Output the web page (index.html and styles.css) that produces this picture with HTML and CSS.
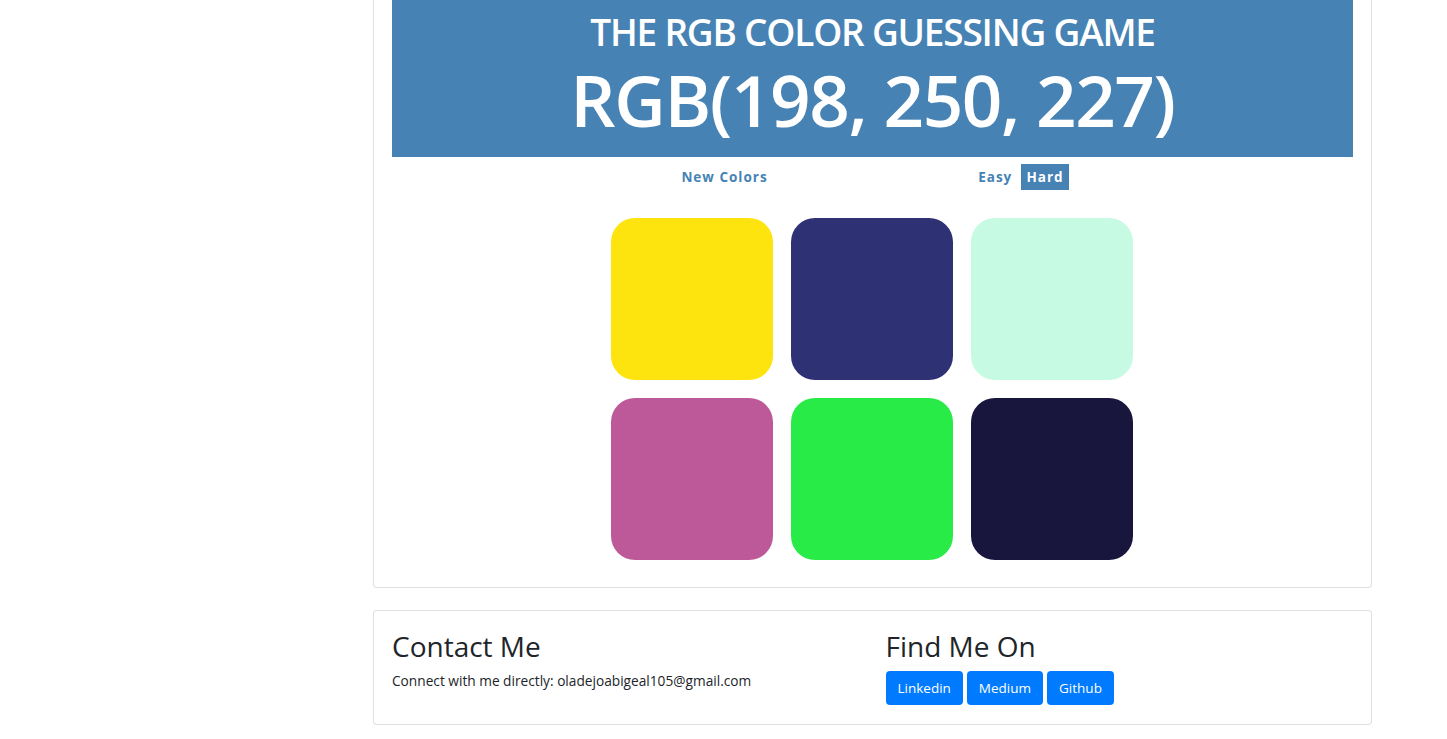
FILE: index.html
```html
<!DOCTYPE html>
<html>
<head>
<meta charset="utf-8">
<link rel="stylesheet" href="styles.css">
</head>
<body>
<div class="page">
  <div class="card game-card">
    <div class="card-body">
      <div class="game-header">
        <div class="title">THE RGB COLOR GUESSING GAME</div>
        <div class="color-display">RGB(198, 250, 227)</div>
      </div>
      <div class="stripe">
        <button class="btn-game">New Colors</button>
        <span class="message"></span>
        <button class="btn-game">Easy</button>
        <button class="btn-game selected">Hard</button>
      </div>
      <div class="squares">
        <div class="square" style="background: rgb(253, 228, 14);"></div>
        <div class="square" style="background: rgb(46, 49, 115);"></div>
        <div class="square" style="background: rgb(198, 250, 227);"></div>
        <div class="square" style="background: rgb(190, 89, 153);"></div>
        <div class="square" style="background: rgb(41, 235, 71);"></div>
        <div class="square" style="background: rgb(24, 22, 61);"></div>
      </div>
    </div>
  </div>
  <div class="card contact-card">
    <div class="card-body row">
      <div class="col">
        <h3 class="heading">Contact Me</h3>
        <p class="contact-text">Connect with me directly: oladejoabigeal105@gmail.com</p>
      </div>
      <div class="col col-right">
        <h3 class="heading">Find Me On</h3>
        <div class="links">
          <a class="btn-link">Linkedin</a>
          <a class="btn-link">Medium</a>
          <a class="btn-link">Github</a>
        </div>
      </div>
    </div>
  </div>
</div>
</body>
</html>
```
FILE: styles.css
```css
html, body {
  margin: 0;
  padding: 0;
  background: #fff;
}
body {
  font-family: "Open Sans", "Noto Sans", sans-serif;
  color: #212529;
}
.page {
  width: 999px;
  margin-left: 373px;
  margin-top: -19px;
}
.card {
  border: 1px solid rgba(0, 0, 0, 0.125);
  border-radius: 4px;
  background: #fff;
}
.card-body {
  padding: 18px;
}
.game-header {
  background: #4682b4;
  color: #fff;
  text-align: center;
  padding-top: 8px;
  padding-bottom: 14px;
}
.title {
  font-size: 37px;
  font-weight: 600;
  line-height: 48px;
  letter-spacing: -1.2px;
}
.color-display {
  font-size: 71px;
  font-weight: 600;
  line-height: 87px;
  letter-spacing: -1.4px;
}
.stripe {
  text-align: center;
  padding: 7px 0;
  height: 26px;
}
.btn-game {
  border: none;
  background: none;
  font-family: inherit;
  font-weight: 700;
  font-size: 13.5px;
  letter-spacing: 1px;
  color: #4682b4;
  height: 26px;
  padding: 0 5px;
  vertical-align: top;
}
.btn-game.selected {
  background: #4682b4;
  color: #fff;
}
.message {
  display: inline-block;
  width: 20%;
}
.squares {
  width: 540px;
  margin: 12px 0 0 210px;
  display: grid;
  grid-template-columns: repeat(3, 162px);
  gap: 18px;
  padding: 9px;
  box-sizing: border-box;
}
.square {
  width: 162px;
  height: 162px;
  border-radius: 24px;
}
.contact-card {
  margin-top: 22px;
}
.contact-card .card-body {
  padding-bottom: 19px;
}
.row {
  display: grid;
  grid-template-columns: 1fr 1fr;
}
.col-right {
  padding-left: 13px;
}
.heading {
  margin: 0 0 8px;
  font-size: 28px;
  font-weight: 500;
  line-height: 34px;
}
.contact-text {
  margin: 0;
  font-size: 13.7px;
  line-height: 20px;
}
.links {
  display: flex;
  gap: 4px;
}
.btn-link {
  display: inline-block;
  background: #007bff;
  color: #fff;
  font-size: 13.5px;
  line-height: 22px;
  padding: 6px 12px;
  border-radius: 4px;
}
```
